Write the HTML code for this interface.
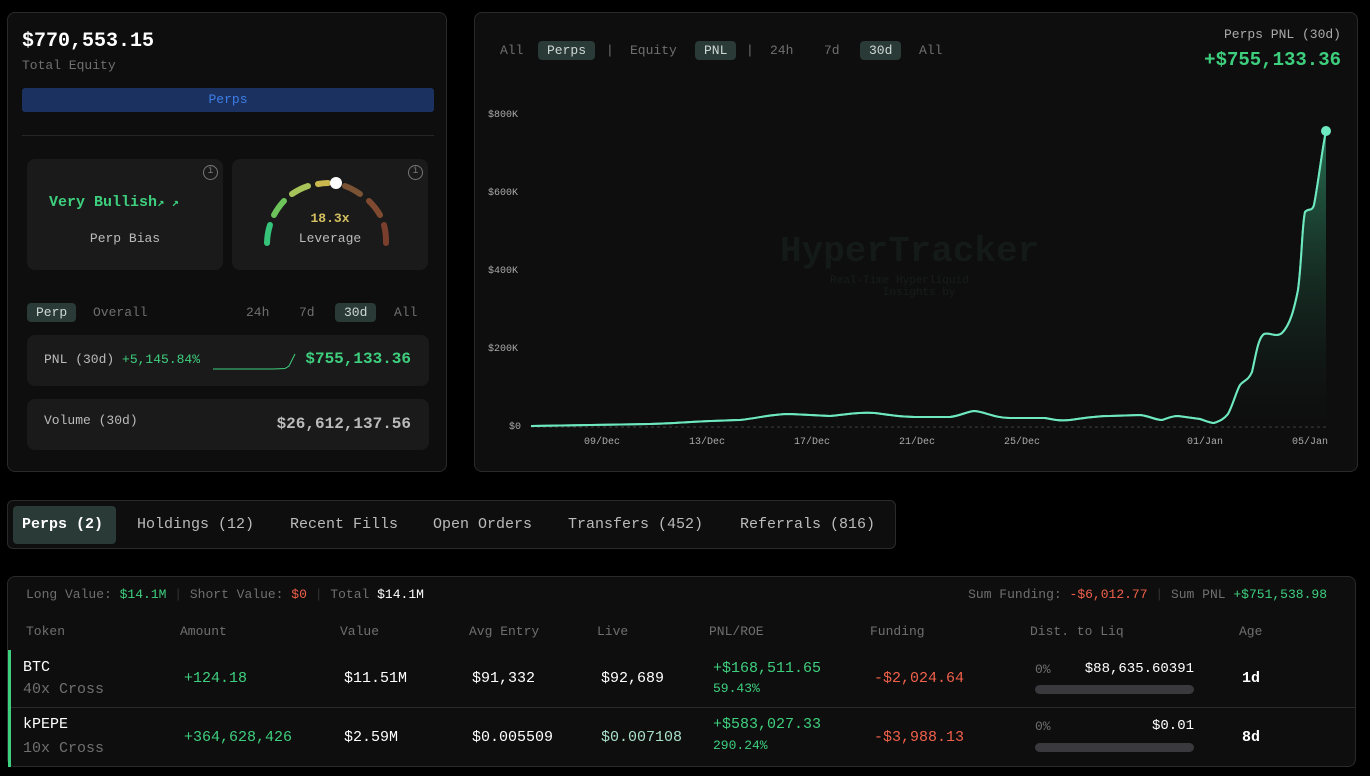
<!DOCTYPE html>
<html><head><meta charset="utf-8"><style>
*{box-sizing:border-box;margin:0;padding:0}
body{width:1370px;height:776px;background:#000;font-family:"Liberation Mono","DejaVu Sans Mono",monospace;color:#ddd;position:relative;overflow:hidden}
.card{position:absolute;background:#0e0e0e;border:1px solid #2a2a2a;border-radius:8px}
.abs{position:absolute}
.g{color:#3ecf7e}.r{color:#f0604a}.mut{color:#6f6f6f}
.pill{background:#2a3a36;border-radius:4px;color:#cfd8d4;padding:2px 9px}
.box{position:absolute;background:#1a1a1a;border-radius:8px}
.tab{position:absolute;top:15px;font-size:15px;color:#bbb;white-space:nowrap}
</style></head><body>

<div class="card" style="left:7px;top:12px;width:440px;height:460px">
 <div class="abs" style="left:14px;top:17px;font-size:20px;font-weight:bold;color:#fff">$770,553.15</div>
 <div class="abs mut" style="left:14px;top:45px;font-size:13px">Total Equity</div>
 <div class="abs" style="left:14px;top:75px;width:412px;height:24px;background:#1b3260;border-radius:3px;color:#3d7de8;font-size:13px;text-align:center;line-height:24px">Perps</div>
 <div class="abs" style="left:14px;top:122px;width:412px;height:1px;background:#262626"></div>
 <div class="box" style="left:19px;top:146px;width:196px;height:111px">
  <div class="abs" style="right:5px;top:6px;width:15px;height:15px;border:1.5px solid #777;border-radius:50%;color:#777;font-size:10px;text-align:center;line-height:12px">i</div>
  <div class="abs g" style="left:22px;top:35px;font-size:15px;font-weight:bold">Very Bullish<span style="font-size:12px">↗ ↗</span></div>
  <div class="abs" style="left:0;width:196px;top:72px;text-align:center;font-size:13px;color:#bbb">Perp Bias</div>
 </div>
 <div class="box" style="left:224px;top:146px;width:196px;height:111px">
  <div class="abs" style="right:5px;top:6px;width:15px;height:15px;border:1.5px solid #777;border-radius:50%;color:#777;font-size:10px;text-align:center;line-height:12px">i</div>
  <svg class="abs" style="left:0;top:0" width="196" height="111">
   <g fill="none" stroke-width="6" stroke-linecap="round">
    <path d="M35 84 A64 64 0 0 1 38 66" stroke="#35c47a"/>
    <path d="M42 56 A64 64 0 0 1 52 42" stroke="#6cc45a"/>
    <path d="M60 35 A64 64 0 0 1 76 27" stroke="#a6c45a"/>
    <path d="M86 25 A64 64 0 0 1 96 24" stroke="#c9b850"/>
    <path d="M113 27 A64 64 0 0 1 128 35" stroke="#7a5234"/>
    <path d="M137 42 A64 64 0 0 1 148 56" stroke="#7f4a30"/>
    <path d="M152 66 A64 64 0 0 1 154 84" stroke="#7a3f2c"/>
   </g>
   <circle cx="104" cy="24" r="6" fill="#fff"/>
  </svg>
  <div class="abs" style="left:0;width:196px;top:52px;text-align:center;font-size:13px;font-weight:bold;color:#d4c060">18.3x</div>
  <div class="abs" style="left:0;width:196px;top:72px;text-align:center;font-size:13px;color:#bbb">Leverage</div>
 </div>
 <div class="abs" style="left:19px;top:290px;font-size:13px;width:402px">
  <span class="pill abs" style="left:0;top:0">Perp</span>
  <span class="abs mut" style="left:66px;top:2px">Overall</span>
  <span class="abs mut" style="left:219px;top:2px">24h</span>
  <span class="abs mut" style="left:272px;top:2px">7d</span>
  <span class="pill abs" style="left:308px;top:0">30d</span>
  <span class="abs mut" style="left:367px;top:2px">All</span>
 </div>
 <div class="box" style="left:19px;top:322px;width:402px;height:51px">
  <div class="abs" style="left:17px;top:17px;font-size:13px;color:#bbb">PNL (30d) <span class="g">+5,145.84%</span></div>
  <svg class="abs" style="left:186px;top:14px" width="84" height="22"><path d="M0 20 L60 20 L72 19.5 L76 17 L82 5" fill="none" stroke="#3ecf7e" stroke-width="1"/></svg>
  <div class="abs g" style="right:18px;top:15px;font-size:16px;font-weight:bold">$755,133.36</div>
 </div>
 <div class="box" style="left:19px;top:386px;width:402px;height:51px">
  <div class="abs" style="left:17px;top:14px;font-size:13px;color:#bbb">Volume (30d)</div>
  <div class="abs" style="right:18px;top:16px;font-size:16px;font-weight:bold;color:#bbb">$26,612,137.56</div>
 </div>
</div>

<div class="card" style="left:474px;top:12px;width:884px;height:460px">
 <div class="abs" style="left:0;top:28px;font-size:13px;width:500px">
  <span class="abs mut" style="left:25px;top:2px">All</span>
  <span class="pill abs" style="left:63px;top:0">Perps</span>
  <span class="abs mut" style="left:131px;top:2px">|</span>
  <span class="abs mut" style="left:155px;top:2px">Equity</span>
  <span class="pill abs" style="left:220px;top:0">PNL</span>
  <span class="abs mut" style="left:271px;top:2px">|</span>
  <span class="abs mut" style="left:295px;top:2px">24h</span>
  <span class="abs mut" style="left:349px;top:2px">7d</span>
  <span class="pill abs" style="left:385px;top:0">30d</span>
  <span class="abs mut" style="left:444px;top:2px">All</span>
 </div>
 <div class="abs" style="right:16px;top:14px;font-size:13px;color:#aaa">Perps PNL (30d)</div>
 <div class="abs g" style="right:16px;top:36px;font-size:19px;font-weight:bold">+$755,133.36</div>
 <div class="abs" style="left:305px;top:218px;font-size:36px;font-weight:bold;color:#141a18">HyperTracker</div>
 <div class="abs" style="left:355px;top:262px;font-size:11px;color:#171d1b;line-height:12px">Real-Time Hyperliquid<br>&nbsp;&nbsp;&nbsp;&nbsp;&nbsp;&nbsp;&nbsp;&nbsp;Insights by</div>
</div>
<svg class="abs" style="left:0;top:0" width="1370" height="470">
 <g font-size="10" fill="#aaa" font-family="Liberation Mono,monospace">
  <text x="488" y="117">$800K</text><text x="488" y="195">$600K</text><text x="488" y="273">$400K</text><text x="488" y="351">$200K</text><text x="509" y="429">$0</text>
  <text x="584" y="444">09/Dec</text><text x="689" y="444">13/Dec</text><text x="794" y="444">17/Dec</text><text x="899" y="444">21/Dec</text><text x="1004" y="444">25/Dec</text><text x="1187" y="444">01/Jan</text><text x="1292" y="444">05/Jan</text>
 </g>
 <line x1="531" y1="427" x2="1326" y2="427" stroke="#444" stroke-dasharray="3 3"/>
 <defs><linearGradient id="gr" x1="0" y1="0" x2="0" y2="1"><stop offset="0" stop-color="#2a7a5a" stop-opacity=".9"/><stop offset="1" stop-color="#0e0e0e" stop-opacity=".2"/></linearGradient></defs>
 <path id="ln" d="M531 426 L650 424 C680 423 700 421 740 420 C760 418 770 414 790 414 L830 416 C850 414 860 412 875 413 C890 415 900 417 920 417 L950 417 C960 416 968 411 975 411 C985 412 995 418 1010 418 L1045 418 C1055 420 1060 421 1070 420 C1085 418 1095 416 1110 416 L1140 415 C1150 416 1155 420 1162 420 C1168 418 1172 416 1178 416 L1200 419 C1206 421 1210 423 1214 423 C1220 421 1224 419 1228 414 C1233 405 1236 392 1240 385 C1244 380 1248 381 1252 372 C1256 355 1258 338 1264 334 C1270 332 1276 338 1282 333 C1290 325 1294 310 1298 290 C1302 260 1302 225 1305 212 C1308 208 1312 212 1314 205 C1318 185 1322 150 1326 131" fill="none" stroke="#6ee8c0" stroke-width="2" stroke-linejoin="round"/>
 <path d="M531 426 L650 424 C680 423 700 421 740 420 C760 418 770 414 790 414 L830 416 C850 414 860 412 875 413 C890 415 900 417 920 417 L950 417 C960 416 968 411 975 411 C985 412 995 418 1010 418 L1045 418 C1055 420 1060 421 1070 420 C1085 418 1095 416 1110 416 L1140 415 C1150 416 1155 420 1162 420 C1168 418 1172 416 1178 416 L1200 419 C1206 421 1210 423 1214 423 C1220 421 1224 419 1228 414 C1233 405 1236 392 1240 385 C1244 380 1248 381 1252 372 C1256 355 1258 338 1264 334 C1270 332 1276 338 1282 333 C1290 325 1294 310 1298 290 C1302 260 1302 225 1305 212 C1308 208 1312 212 1314 205 C1318 185 1322 150 1326 131 L1326 427 L531 427 Z" fill="url(#gr)"/>
 <use href="#ln"/>
 <circle cx="1326" cy="131" r="5" fill="#6ee8c0"/>
</svg>

<div class="card" style="left:7px;top:500px;width:889px;height:49px;border-radius:6px">
 <div class="abs" style="left:5px;top:5px;height:38px;width:103px;background:#2a3a36;border-radius:4px"></div>
 <span class="tab" style="left:14px;color:#fff;font-weight:bold">Perps (2)</span>
 <span class="tab" style="left:129px">Holdings (12)</span>
 <span class="tab" style="left:282px">Recent Fills</span>
 <span class="tab" style="left:425px">Open Orders</span>
 <span class="tab" style="left:560px">Transfers (452)</span>
 <span class="tab" style="left:732px">Referrals (816)</span>
</div>

<div class="card" style="left:7px;top:576px;width:1349px;height:191px">
 <div class="abs mut" style="left:18px;top:10px;font-size:13px">Long Value: <span class="g">$14.1M</span> <span style="color:#333">|</span> Short Value: <span class="r">$0</span> <span style="color:#333">|</span> Total <span style="color:#fff">$14.1M</span></div>
 <div class="abs mut" style="right:28px;top:10px;font-size:13px">Sum Funding: <span class="r">-$6,012.77</span> <span style="color:#333">|</span> Sum PNL <span class="g">+$751,538.98</span></div>
 <div class="abs mut" style="top:47px;left:0;font-size:13px;width:1349px">
  <span class="abs" style="left:18px">Token</span><span class="abs" style="left:172px">Amount</span><span class="abs" style="left:332px">Value</span><span class="abs" style="left:461px">Avg Entry</span><span class="abs" style="left:589px">Live</span><span class="abs" style="left:701px">PNL/ROE</span><span class="abs" style="left:862px">Funding</span><span class="abs" style="left:1022px">Dist. to Liq</span><span class="abs" style="left:1231px">Age</span>
 </div>
 <div class="abs" style="left:0;top:73px;width:3px;height:117px;background:#3ecf7e"></div>
 <div class="abs" style="left:3px;top:130px;width:1345px;height:1px;background:#2a2a2a"></div>
 <div class="abs" style="left:0;top:80px;width:1349px;height:50px;font-size:15px">
  <span class="abs" style="left:15px;top:2px;color:#fff">BTC</span><span class="abs mut" style="left:15px;top:24px">40x Cross</span>
  <span class="abs g" style="left:176px;top:13px">+124.18</span><span class="abs" style="left:336px;top:13px;color:#fff">$11.51M</span><span class="abs" style="left:464px;top:13px;color:#fff">$91,332</span><span class="abs" style="left:593px;top:13px;color:#fff">$92,689</span>
  <span class="abs g" style="left:705px;top:3px">+$168,511.65</span><span class="abs g" style="left:705px;top:24px;font-size:13px">59.43%</span>
  <span class="abs r" style="left:866px;top:13px">-$2,024.64</span>
  <span class="abs mut" style="left:1027px;top:5px;font-size:13px">0%</span><span class="abs" style="left:1026px;top:4px;width:160px;text-align:right;color:#fff;font-size:14px">$88,635.60391</span>
  <div class="abs" style="left:1027px;top:28px;width:159px;height:9px;border-radius:5px;background:#3a3a3e"></div>
  <span class="abs" style="left:1234px;top:13px;color:#fff;font-weight:bold">1d</span>
 </div>
 <div class="abs" style="left:0;top:139px;width:1349px;height:50px;font-size:15px">
  <span class="abs" style="left:15px;top:0;color:#fff">kPEPE</span><span class="abs mut" style="left:15px;top:24px">10x Cross</span>
  <span class="abs g" style="left:176px;top:13px">+364,628,426</span><span class="abs" style="left:336px;top:13px;color:#fff">$2.59M</span><span class="abs" style="left:464px;top:13px;color:#fff">$0.005509</span><span class="abs" style="left:593px;top:13px;color:#a8e0c8">$0.007108</span>
  <span class="abs g" style="left:705px;top:0">+$583,027.33</span><span class="abs g" style="left:705px;top:22px;font-size:13px">290.24%</span>
  <span class="abs r" style="left:866px;top:13px">-$3,988.13</span>
  <span class="abs mut" style="left:1027px;top:3px;font-size:13px">0%</span><span class="abs" style="left:1026px;top:2px;width:160px;text-align:right;color:#fff;font-size:14px">$0.01</span>
  <div class="abs" style="left:1027px;top:27px;width:159px;height:9px;border-radius:5px;background:#3a3a3e"></div>
  <span class="abs" style="left:1234px;top:13px;color:#fff;font-weight:bold">8d</span>
 </div>
</div>
</body></html>
